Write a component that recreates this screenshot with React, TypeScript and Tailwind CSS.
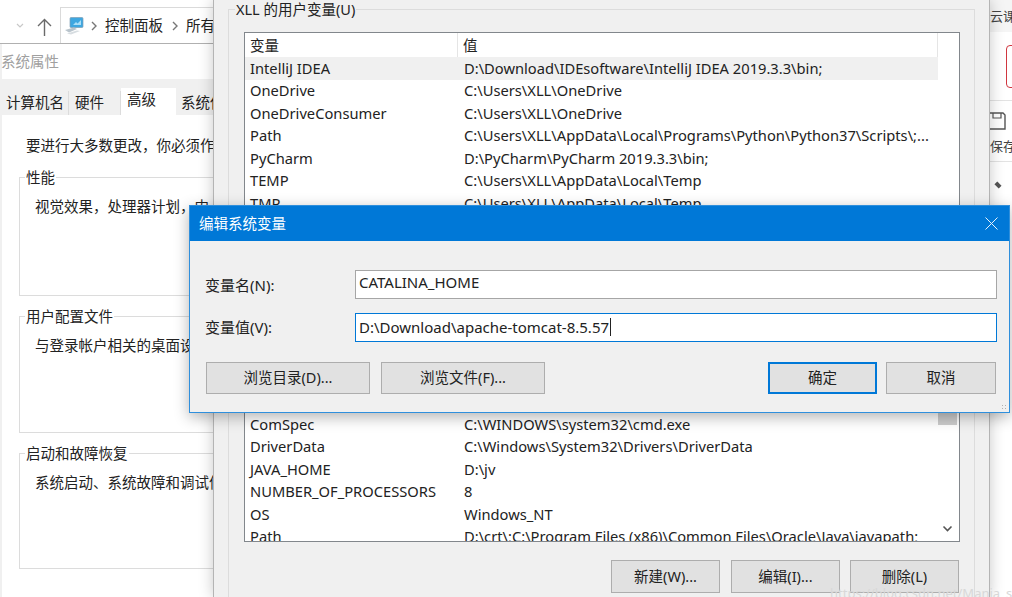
import type { ReactNode } from 'react';

const FONT = '[font-family:"Noto_Sans","Noto_Sans_CJK_SC",sans-serif]';

const userVars = [
  ['IntelliJ IDEA', 'D:\\Download\\IDEsoftware\\IntelliJ IDEA 2019.3.3\\bin;'],
  ['OneDrive', 'C:\\Users\\XLL\\OneDrive'],
  ['OneDriveConsumer', 'C:\\Users\\XLL\\OneDrive'],
  ['Path', 'C:\\Users\\XLL\\AppData\\Local\\Programs\\Python\\Python37\\Scripts\\;...'],
  ['PyCharm', 'D:\\PyCharm\\PyCharm 2019.3.3\\bin;'],
  ['TEMP', 'C:\\Users\\XLL\\AppData\\Local\\Temp'],
  ['TMP', 'C:\\Users\\XLL\\AppData\\Local\\Temp'],
];

const systemVars = [
  ['ComSpec', 'C:\\WINDOWS\\system32\\cmd.exe'],
  ['DriverData', 'C:\\Windows\\System32\\Drivers\\DriverData'],
  ['JAVA_HOME', 'D:\\jv'],
  ['NUMBER_OF_PROCESSORS', '8'],
  ['OS', 'Windows_NT'],
  ['Path', 'D:\\crt\\;C:\\Program Files (x86)\\Common Files\\Oracle\\Java\\javapath;'],
];

function VarRow({ name, value, active }: { name: string; value: string; active?: boolean }) {
  return (
    <div className={`flex h-[22.5px] shrink-0 items-center whitespace-nowrap text-[14.7px] leading-none ${active ? 'bg-[#f0f0f0]' : ''}`}>
      <span className="w-[219px] shrink-0 pl-[5px]">{name}</span>
      <span>{value}</span>
    </div>
  );
}

function WinButton({ children, className = '' }: { children: ReactNode; className?: string }) {
  return (
    <div className={`flex items-center justify-center border bg-[#e1e1e1] text-[14.5px] text-[#222] ${className}`}>
      {children}
    </div>
  );
}

function GroupBox({ title, text, className }: { title: string; text: string; className: string }) {
  return (
    <fieldset className={`ml-[17px] w-[260px] border border-[#dcdcdc] ${className}`}>
      <legend className="ml-[5px] px-[1px] leading-[18px]">{title}</legend>
      <p className="ml-[15px] mt-[10px] whitespace-nowrap">{text}</p>
    </fieldset>
  );
}

function ExplorerBar() {
  return (
    <div className="flex h-[44px] items-end border-b border-[#b0b0b0] bg-white">
      <svg width="60" height="36" viewBox="0 0 60 36" className="shrink-0">
        <path d="M17 17l3 3 3-3" fill="none" stroke="#c8c8c8" strokeWidth="1.2" />
        <path d="M44.5 29V13M38 19l6.5-6.5L51 19" fill="none" stroke="#6a6a6a" strokeWidth="1.4" />
      </svg>
      <div className="flex h-[36px] flex-1 items-center border-l border-t border-[#dadada] pl-[2px] text-[14.5px] text-[#222]">
        <svg width="21" height="20" viewBox="0 0 21 20" className="shrink-0">
          <rect x="7" y="1.5" width="13" height="10" rx="1" fill="#3fa7e0" stroke="#7f9fb5" strokeWidth="0.7" />
          <path d="M10 9l3-3 1.5 1.5L18 4v5z" fill="#a9def7" />
          <path d="M2 14l9-2.5 3 1.5-8 3.5z" fill="#b9c4cc" />
          <path d="M4 17.5l10-3 3 .6-9 3.4z" fill="#d7dde1" />
        </svg>
        <svg width="8" height="10" viewBox="0 0 8 10" className="ml-[6px] shrink-0">
          <path d="M2 1l4 4-4 4" fill="none" stroke="#777" strokeWidth="1.4" />
        </svg>
        <span className="ml-[7px] whitespace-nowrap">控制面板</span>
        <svg width="8" height="10" viewBox="0 0 8 10" className="ml-[8px] shrink-0">
          <path d="M2 1l4 4-4 4" fill="none" stroke="#777" strokeWidth="1.4" />
        </svg>
        <span className="ml-[7px] whitespace-nowrap">所有</span>
      </div>
    </div>
  );
}

function SystemProperties() {
  return (
    <div className="flex h-[553px] flex-col border-l-2 border-[#f0f0f0] bg-white text-[14.5px] text-[#222]">
      <div className="-ml-[1px] flex h-[35px] shrink-0 items-center text-[#a0a0a0]">系统属性</div>
      <div className="flex h-[36px] shrink-0 items-end bg-[#f0f0f0] pl-[1px]">
        <div className="flex h-[24px] w-[66px] items-center whitespace-nowrap border-r border-[#dcdcdc] pl-[3px]">计算机名</div>
        <div className="flex h-[24px] w-[52px] items-center whitespace-nowrap border-r border-[#dcdcdc] pl-[6px]">硬件</div>
        <div className="flex h-[27px] w-[55px] items-start whitespace-nowrap bg-white pl-[6px] pt-[1px]">高级</div>
        <div className="flex h-[24px] flex-1 items-center overflow-hidden whitespace-nowrap pl-[5px]">系统保</div>
      </div>
      <div className="overflow-hidden">
        <p className="ml-[24px] mt-[21px] whitespace-nowrap leading-[18px]">要进行大多数更改，你必须作</p>
        <GroupBox className="mt-[14px] h-[128px]" title="性能" text="视觉效果，处理器计划，内" />
        <GroupBox className="mt-[11px] h-[126px]" title="用户配置文件" text="与登录帐户相关的桌面设" />
        <GroupBox className="mt-[11px] h-[125px]" title="启动和故障恢复" text="系统启动、系统故障和调试信" />
      </div>
    </div>
  );
}

function EnvironmentWindow() {
  return (
    <div className="absolute left-[213px] top-0 h-[597px] w-[777px] border-x border-[#b4b4b4] bg-[#f0f0f0] text-[14.5px] text-[#222] shadow-[0_0_14px_rgba(0,0,0,0.22)]">
      <div className="mx-[14px] mt-[9px] h-[588px] border border-b-0 border-[#dcdcdc] px-[15px]">
        <div className="-ml-[9px] -mt-[11px] w-fit bg-[#f0f0f0] px-[1px] leading-[20px]">XLL 的用户变量(U)</div>
        <div className="mt-[13px] h-[208px] w-[716px] overflow-hidden border border-[#82878c] bg-white">
          <div className="w-[693px]">
            <div className="flex h-[24px] items-center border-r border-[#e5e5e5] leading-none">
              <span className="flex h-full w-[213px] shrink-0 items-center border-r border-[#e5e5e5] pl-[5px]">变量</span>
              <span className="pl-[5px]">值</span>
            </div>
            {userVars.map(([name, value], i) => (
              <VarRow key={name} name={name} value={value} active={i === 0} />
            ))}
          </div>
        </div>
        <div className="mt-[160px] flex h-[142px] w-[716px] border border-t-0 border-[#82878c] bg-white">
          <div className="min-w-0 flex-1 overflow-hidden pt-[13px]">
            {systemVars.map(([name, value], i) => (
              <VarRow key={i} name={name} value={value} />
            ))}
          </div>
          <div className="flex w-[21px] shrink-0 flex-col justify-between">
            <div className="h-[25px] w-[19px] bg-[#cdcdcd]" />
            <svg width="19" height="12" viewBox="0 0 19 12" className="mb-[6px]">
              <path d="M5.5 3.5l4 4 4-4" fill="none" stroke="#555" strokeWidth="1.6" />
            </svg>
          </div>
        </div>
        <div className="mt-[18px] flex w-[715px] justify-end">
          <WinButton className="h-[33px] w-[109px] border-[#adadad]">新建(W)...</WinButton>
          <WinButton className="ml-[11px] h-[33px] w-[109px] border-[#adadad]">编辑(I)...</WinButton>
          <WinButton className="ml-[10px] h-[33px] w-[109px] border-[#adadad]">删除(L)</WinButton>
        </div>
      </div>
    </div>
  );
}

function EditDialog() {
  return (
    <div className="absolute left-[189px] top-[205px] flex h-[208px] w-[821px] flex-col border border-[#2f8fdc] bg-[#f0f0f0] text-[14.5px] text-[#222] shadow-[0_4px_14px_rgba(0,0,0,0.3)]">
      <div className="flex h-[35px] shrink-0 items-center justify-between bg-[#0078d7] pl-[9px] pr-[11px] text-white">
        <span>编辑系统变量</span>
        <svg width="13" height="13" viewBox="0 0 13 13">
          <path d="M.5.5l12 12M12.5.5l-12 12" stroke="#e8f2fb" strokeWidth="1" fill="none" />
        </svg>
      </div>
      <div className="flex items-center pl-[15px] pr-[12px] pt-[29px] text-[15px]">
        <span className="w-[150px] shrink-0 pt-[1px]">变量名(N):</span>
        <div className="flex h-[29px] flex-1 items-center border border-[#a6a6a6] bg-white pb-[4px] pl-[3px]">CATALINA_HOME</div>
      </div>
      <div className="flex items-center pl-[15px] pr-[12px] pt-[14px] text-[15px]">
        <span className="w-[150px] shrink-0">变量值(V):</span>
        <div className="flex h-[29px] flex-1 items-center border border-[#0078d7] bg-white pb-[1px] pl-[3px]">
          D:\Download\apache-tomcat-8.5.57
          <span className="ml-[1px] h-[18px] w-px bg-[#222]" />
        </div>
      </div>
      <div className="flex pl-[16px] pr-[13px] pt-[20px]">
        <WinButton className="h-[32px] w-[164px] border-[#adadad]">浏览目录(D)...</WinButton>
        <WinButton className="ml-[11px] h-[32px] w-[164px] border-[#adadad]">浏览文件(F)...</WinButton>
        <WinButton className="ml-auto h-[32px] w-[109px] border-2 border-[#0078d7]">确定</WinButton>
        <WinButton className="ml-[9px] h-[32px] w-[110px] border-[#adadad]">取消</WinButton>
      </div>
    </div>
  );
}

function RightStrip() {
  return (
    <div className="absolute left-[990px] top-0 h-[597px] w-[22px] overflow-hidden bg-white text-[13px] text-[#444]">
      <div className="flex h-[32px] items-center whitespace-nowrap bg-[#f5f5f5] leading-none">云课</div>
      <div className="ml-[16px] mt-[13px] h-[43px] w-[20px] rounded-[4px] border border-[#d0363f]" />
      <div className="mt-[12px] h-px bg-[#e3e3e3]" />
      <svg width="16" height="20" viewBox="0 0 16 20" className="mt-[11px]">
        <path d="M-2 1h15l2 2v14H-2z" fill="none" stroke="#555" strokeWidth="1.4" />
        <path d="M3 1v5h8V1" fill="none" stroke="#555" strokeWidth="1.2" />
      </svg>
      <div className="mt-[5px] whitespace-nowrap leading-[18px]">保存</div>
      <div className="mt-[6px] h-px bg-[#e3e3e3]" />
      <div className="ml-[5px] mt-[21px] h-[4px] w-[6px] rotate-45 bg-[#555]" />
    </div>
  );
}

export default function App() {
  return (
    <div className={`relative h-[597px] w-[1012px] overflow-hidden bg-white ${FONT}`}>
      <div className="w-[215px] overflow-hidden">
        <ExplorerBar />
        <SystemProperties />
      </div>
      <RightStrip />
      <EnvironmentWindow />
      <EditDialog />
      <div className="absolute bottom-[-3px] left-[830px] whitespace-nowrap text-[13px] leading-[14px] text-[#d8d8d8]">
        https://blog.csdn.net/Mania_ss
      </div>
      <div className="absolute right-[4px] top-[404px] h-[7px] w-[7px] bg-[radial-gradient(#b0b0b0_1px,transparent_1px)] bg-[length:3px_3px]" />
    </div>
  );
}
